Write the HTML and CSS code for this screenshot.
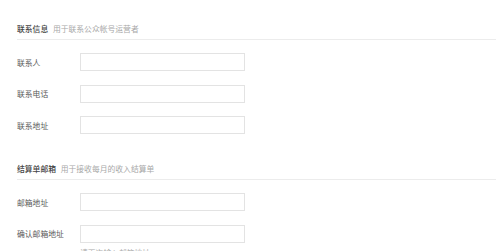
FILE: index.html
```html
<!DOCTYPE html>
<html lang="zh-CN">
<head>
  <meta charset="UTF-8">
  <title>账户信息</title>
  <link rel="stylesheet" href="styles.css">
</head>
<body>
  <div class="page">
    <!-- 联系信息 -->
    <div class="section">
      <div class="section-head">
        <span class="section-title">联系信息</span>
        <span class="section-tip">用于联系公众帐号运营者</span>
      </div>
      <div class="row">
        <label for="contact-name">联系人</label>
        <input type="text" id="contact-name">
      </div>
      <div class="row">
        <label for="contact-phone">联系电话</label>
        <input type="text" id="contact-phone">
      </div>
      <div class="row">
        <label for="contact-addr">联系地址</label>
        <input type="text" id="contact-addr">
      </div>
    </div>

    <!-- 结算单邮箱 -->
    <div class="section">
      <div class="section-head">
        <span class="section-title">结算单邮箱</span>
        <span class="section-tip">用于接收每月的收入结算单</span>
      </div>
      <div class="row">
        <label for="mail">邮箱地址</label>
        <input type="text" id="mail">
      </div>
      <div class="row">
        <label for="mail-confirm">确认邮箱地址</label>
        <input type="text" id="mail-confirm">
      </div>
      <div class="hint">请再次输入邮箱地址</div>
    </div>
  </div>
</body>
</html>
```
FILE: styles.css
```css
body {
  margin: 0;
  background-color: #fff;
  font-family: 'Noto Sans CJK SC', 'Liberation Sans', sans-serif;
  font-size: 7.8px;
  color: #555;
  overflow: hidden;
}

.page {
  padding-left: 17px;
}

.section {
  margin-bottom: 28px;
}

.section-head {
  padding-top: 23px;
  padding-bottom: 4px;
  line-height: 12px;
  border-bottom: 1px solid #ececec;
  margin-bottom: 13px;
}

.section + .section .section-head {
  padding-top: 1px;
}

.section-title {
  color: #444;
  font-weight: 500;
}

.section-tip {
  color: #a8a8a8;
  margin-left: 3px;
}

.row {
  display: flex;
  align-items: center;
  height: 18px;
  margin-bottom: 13.5px;
}

.row label {
  width: 63px;
  color: #5a5a5a;
}

.row input {
  width: 165px;
  height: 18px;
  box-sizing: border-box;
  border: 1px solid #e3e3e3;
  margin: 0;
  padding: 0 4px;
  outline: none;
}

.hint {
  margin-top: -9px;
  padding-left: 63px;
  color: #aaa;
  line-height: 12px;
}
```
